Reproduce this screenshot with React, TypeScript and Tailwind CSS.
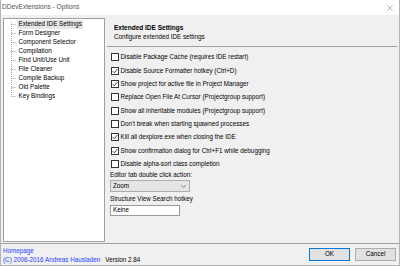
import React from "react";

const items = [
  "Extended IDE Settings",
  "Form Designer",
  "Component Selector",
  "Compilation",
  "Find Unit/Use Unit",
  "File Cleaner",
  "Compile Backup",
  "Old Palette",
  "Key Bindings",
];

const checks: [string, boolean][] = [
  ["Disable Package Cache (requires IDE restart)", false],
  ["Disable Source Formatter hotkey (Ctrl+D)", true],
  ["Show project for active file in Project Manager", true],
  ["Replace Open File At Cursor (Projectgroup support)", false],
  ["Show all inheritable modules (Projectgroup support)", false],
  ["Don't break when starting spawned processes", false],
  ["Kill all dexplore.exe when closing the IDE", true],
  ["Show confirmation dialog for Ctrl+F1 while debugging", true],
  ["Disable alpha-sort class completion", false],
];

function Check({ on }: { on: boolean }) {
  return (
    <div className="w-[8px] h-[8px] bg-white border border-[#333333] flex items-center justify-center shrink-0">
      {on && (
        <svg width="6" height="6" viewBox="0 0 6 6">
          <path d="M0.6 3.1 L2.3 4.8 L5.4 1" fill="none" stroke="#333" strokeWidth="0.9" />
        </svg>
      )}
    </div>
  );
}

export default function App() {
  return (
    <div className="w-[400px] h-[266px] bg-[#f0f0f0] flex flex-col border-x border-b border-[#b4b4b4] font-['Liberation_Sans',Arial,sans-serif] text-[6.3px] leading-none text-black overflow-hidden">
      {/* title bar */}
      <div className="h-[15px] bg-white flex items-center justify-between pl-[1px] pr-[6px] shrink-0">
        <span className="text-[6.6px] text-[#555]">DDevExtensions - Options</span>
        <svg width="6" height="6" viewBox="0 0 6 6">
          <path d="M0.3 0.3 L5.7 5.7 M5.7 0.3 L0.3 5.7" stroke="#9a9a9a" strokeWidth="0.7" />
        </svg>
      </div>

      {/* body */}
      <div className="flex h-[228px] pt-[3px] pl-[2px] pr-[2px] shrink-0">
        {/* tree */}
        <div className="w-[102px] h-[224px] bg-white border border-[#a0a0a0] pt-[1px] flex">
          <svg width="13" height="81" viewBox="0 0 13 81" className="shrink-0">
            <g stroke="#a0a0a0" strokeWidth="1" strokeDasharray="1 1" fill="none">
              <path d="M7.5 2 V76.5" />
              {items.map((_, i) => (
                <path key={i} d={`M7.5 ${i * 9 + 4.5} H12`} />
              ))}
            </g>
          </svg>
          <div className="flex flex-col">
            {items.map((t, i) => (
              <div key={t} className="h-[9px] flex items-center">
                <span className={`px-[1.5px] h-[9px] flex items-center ${i === 0 ? "bg-[#e5e5e5]" : ""}`}>{t}</span>
              </div>
            ))}
          </div>
        </div>

        {/* right panel */}
        <div className="flex-1 ml-[2px] flex flex-col">
          <div className="pt-[6px] pl-[7px]">
            <div className="h-[9px] flex items-center font-bold text-[6.5px]">Extended IDE Settings</div>
            <div className="h-[9px] flex items-center">Configure extended IDE settings</div>
          </div>
          <div className="mt-[4px] border-t border-[#a0a0a0]" />
          <div className="mt-[3.7px] flex flex-col pl-[4px]">
            {checks.map(([t, on]) => (
              <div key={t} className="h-[13.33px] flex items-center gap-[1.5px]">
                <Check on={on} />
                <span>{t}</span>
              </div>
            ))}
          </div>
          <div className="pl-[3px] flex flex-col">
            <div className="h-[9px] flex items-center">Editor tab double click action:</div>
            <div className="mt-[0.5px] w-[80px] h-[12px] bg-[#e5e5e5] border border-[#adadad] flex items-center justify-between pl-[2px] pr-[3px]">
              <span>Zoom</span>
              <svg width="5" height="3" viewBox="0 0 5 3">
                <path d="M0.3 0.3 L2.5 2.5 L4.7 0.3" fill="none" stroke="#555" strokeWidth="0.7" />
              </svg>
            </div>
            <div className="mt-[3px] h-[9px] flex items-center">Structure View Search hotkey</div>
            <div className="mt-[0.5px] w-[70px] h-[11px] bg-white border border-[#9a9a9a] flex items-center pl-[2px]">
              <span>Keine</span>
            </div>
          </div>
        </div>
      </div>

      {/* separator */}
      <div className="border-t border-[#a0a0a0] shrink-0" />

      {/* footer */}
      <div className="flex-1 flex justify-between pl-[2px] pr-[3px]">
        <div className="pt-[2px] flex flex-col">
          <div className="h-[9.5px] flex items-center text-[#1f3fff]">Homepage</div>
          <div className="h-[9.5px] flex items-center gap-[5px]">
            <span className="text-[#1f3fff]">(C) 2006-2016 Andreas Hausladen</span>
            <span>Version 2.84</span>
          </div>
        </div>
        <div className="mt-[4px] flex gap-[5px] items-start">
          <div className="w-[41px] h-[13px] bg-[#e1e1e1] border border-[#0078d7] flex items-center justify-center">OK</div>
          <div className="w-[41px] h-[13px] bg-[#e1e1e1] border border-[#adadad] flex items-center justify-center">Cancel</div>
        </div>
      </div>
    </div>
  );
}
